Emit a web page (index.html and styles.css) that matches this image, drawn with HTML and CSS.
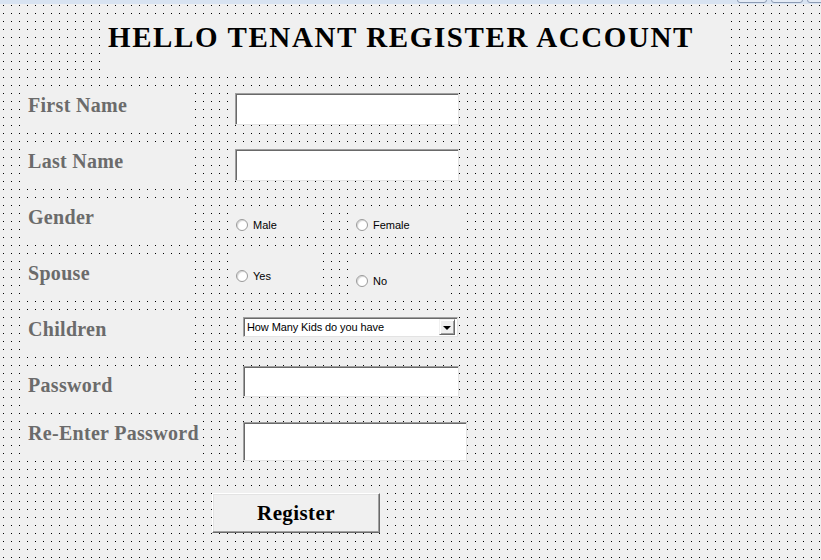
FILE: index.html
```
<!doctype html>
<html lang="en">
<head>
    <meta charset="UTF-8">
    <title>Tenant Register</title>
    <link rel="stylesheet" href="styles.css">
</head>
<body>
<div class="titlebar">
    <div class="caption-btns">
        <span class="cap-btn"></span>
        <span class="cap-btn cap-max"></span>
        <span class="cap-btn"></span>
    </div>
</div>

<div class="form">
    <h1 class="title">HELLO TENANT REGISTER ACCOUNT</h1>

    <div class="row row-first">
        <label class="lbl">First Name</label>
        <input class="txt txt-name" type="text">
    </div>

    <div class="row row-last">
        <label class="lbl">Last Name</label>
        <input class="txt txt-name" type="text">
    </div>

    <div class="row row-gender">
        <label class="lbl">Gender</label>
        <div class="opt opt-left"><span class="radio"></span>Male</div>
        <div class="opt opt-right"><span class="radio"></span>Female</div>
    </div>

    <div class="row row-spouse">
        <label class="lbl">Spouse</label>
        <div class="opt opt-left opt-yes"><span class="radio"></span>Yes</div>
        <div class="opt opt-right opt-no"><span class="radio"></span>No</div>
    </div>

    <div class="row row-kids">
        <label class="lbl">Children</label>
        <div class="combo">
            <span class="combo-text">How Many Kids do you have</span>
            <span class="combo-btn"><span class="arrow"></span></span>
        </div>
    </div>

    <div class="row row-pass">
        <label class="lbl">Password</label>
        <input class="txt txt-pass" type="password">
    </div>

    <div class="row row-repass">
        <label class="lbl lbl-wide">Re-Enter Password</label>
        <input class="txt txt-repass" type="password">
    </div>

    <div class="row row-btn">
        <button class="btn" type="button">Register</button>
    </div>
</div>
</body>
</html>
```

FILE: styles.css
```
* {
    margin: 0;
    padding: 0;
    box-sizing: border-box;
}

body {
    width: 821px;
    height: 560px;
    overflow: hidden;
    background: #f0f0f0;
}

/* window frame edge */
.titlebar {
    height: 4px;
    background: #d8e3f1;
    display: flex;
    justify-content: flex-end;
    overflow: hidden;
}

.caption-btns {
    display: flex;
    gap: 4px;
    margin-right: -16px;
    margin-top: -6px;
}

.cap-btn {
    width: 30px;
    height: 9px;
    border: 1px solid #8d9cb4;
    border-radius: 0 0 3px 3px;
    background: #e4ebf5;
}

.cap-max {
    width: 32px;
}

/* designer grid: 1px dots every 8px */
.form {
    height: 556px;
    padding-top: 10px;
    background-color: #f0f0f0;
    background-image: linear-gradient(90deg, #f0f0f0 7px, transparent 7px),
                      linear-gradient(#f0f0f0 7px, #000 7px);
    background-size: 8px 8px;
    background-position: -4px -6px;
}

.title {
    margin-left: 101px;
    width: 629px;
    height: 62px;
    padding: 9px 0 0 7px;
    background: #f0f0f0;
    font-family: "Liberation Serif", "Times New Roman", serif;
    font-size: 29px;
    line-height: 29px;
    font-weight: bold;
    letter-spacing: 1.6px;
    color: #000;
}

.row {
    display: flex;
    align-items: flex-start;
}

.row-first { margin-top: 12px; height: 56px; }
.row-last { height: 56px; }
.row-gender { height: 52px; }
.row-spouse { height: 60px; }
.row-kids { height: 54px; }
.row-pass { height: 48px; }
.row-repass { height: 79px; }

.lbl {
    margin-left: 21px;
    width: 172px;
    height: 43px;
    padding: 7px 0 0 7px;
    background: #f0f0f0;
    font-family: "Liberation Serif", "Times New Roman", serif;
    font-size: 20px;
    line-height: 20px;
    font-weight: bold;
    letter-spacing: 0.3px;
    color: #6b6b6b;
    white-space: nowrap;
}

.lbl-wide {
    width: 180px;
    height: 44px;
}

.row-spouse .lbl { margin-top: 4px; }
.row-pass .lbl,
.row-repass .lbl { margin-top: 2px; }

/* sunken 3d text boxes */
.txt {
    display: block;
    background: #fff;
    border-style: solid;
    border-width: 1px;
    border-color: #a0a0a0 #e3e3e3 #e3e3e3 #a0a0a0;
    box-shadow: inset 1px 1px 0 #696969;
    outline: none;
}

.txt-name {
    margin: 5px 0 0 42px;
    width: 224px;
    height: 32px;
}

.txt-pass {
    margin-left: 50px;
    width: 216px;
    height: 31px;
}

.txt-repass {
    margin: 8px 0 0 42px;
    width: 224px;
    height: 39px;
}

/* radio buttons */
.opt {
    display: flex;
    align-items: flex-start;
    gap: 5px;
    background: #f0f0f0;
    font-family: "Liberation Sans", Arial, sans-serif;
    font-size: 11px;
    line-height: 12px;
    color: #000;
}

.opt-left {
    margin-left: 36px;
    width: 92px;
    padding-left: 7px;
}

.opt-right {
    margin-left: 31px;
    width: 110px;
    padding-left: 4px;
}

.row-gender .opt {
    margin-top: 7px;
    height: 30px;
    padding-top: 12px;
}

.opt-yes {
    margin-top: 1px;
    height: 36px;
    padding-top: 17px;
}

.opt-no {
    margin-top: 8px;
    width: 98px;
    height: 37px;
    padding-top: 15px;
}

.radio {
    flex: none;
    width: 12px;
    height: 12px;
    border-radius: 50%;
    border: 1px solid #9a9a9a;
    background: #fff;
    box-shadow: inset 1px 1px 1px #d4d4d4;
}

/* combo box */
.combo {
    margin: 5px 0 0 50px;
    width: 215px;
    height: 20px;
    display: flex;
    align-items: center;
    background: #fff;
    border-style: solid;
    border-width: 1px;
    border-color: #a0a0a0 #e3e3e3 #e3e3e3 #a0a0a0;
    box-shadow: inset 1px 1px 0 #696969;
    padding: 0 2px 0 3px;
}

.combo-text {
    flex: 1;
    font-family: "Liberation Sans", Arial, sans-serif;
    font-size: 11px;
    letter-spacing: -0.1px;
    color: #000;
    white-space: nowrap;
}

.combo-btn {
    width: 16px;
    height: 16px;
    display: flex;
    align-items: center;
    justify-content: center;
    background: #f0f0f0;
    border-style: solid;
    border-width: 1px;
    border-color: #f0f0f0 #696969 #696969 #f0f0f0;
    box-shadow: inset 1px 1px 0 #fff, inset -1px -1px 0 #a0a0a0;
}

.arrow {
    width: 0;
    height: 0;
    border-left: 4px solid transparent;
    border-right: 4px solid transparent;
    border-top: 4px solid #000;
    margin-top: 1px;
}

/* raised button */
.btn {
    margin-left: 212px;
    width: 168px;
    height: 40px;
    background: #f0f0f0;
    border-style: solid;
    border-width: 1px;
    border-color: #fff #696969 #696969 #fff;
    box-shadow: inset -1px -1px 0 #a0a0a0, inset 1px 1px 0 #e3e3e3;
    font-family: "Liberation Serif", "Times New Roman", serif;
    font-size: 21px;
    font-weight: bold;
    letter-spacing: 0.4px;
    color: #000;
}
```
